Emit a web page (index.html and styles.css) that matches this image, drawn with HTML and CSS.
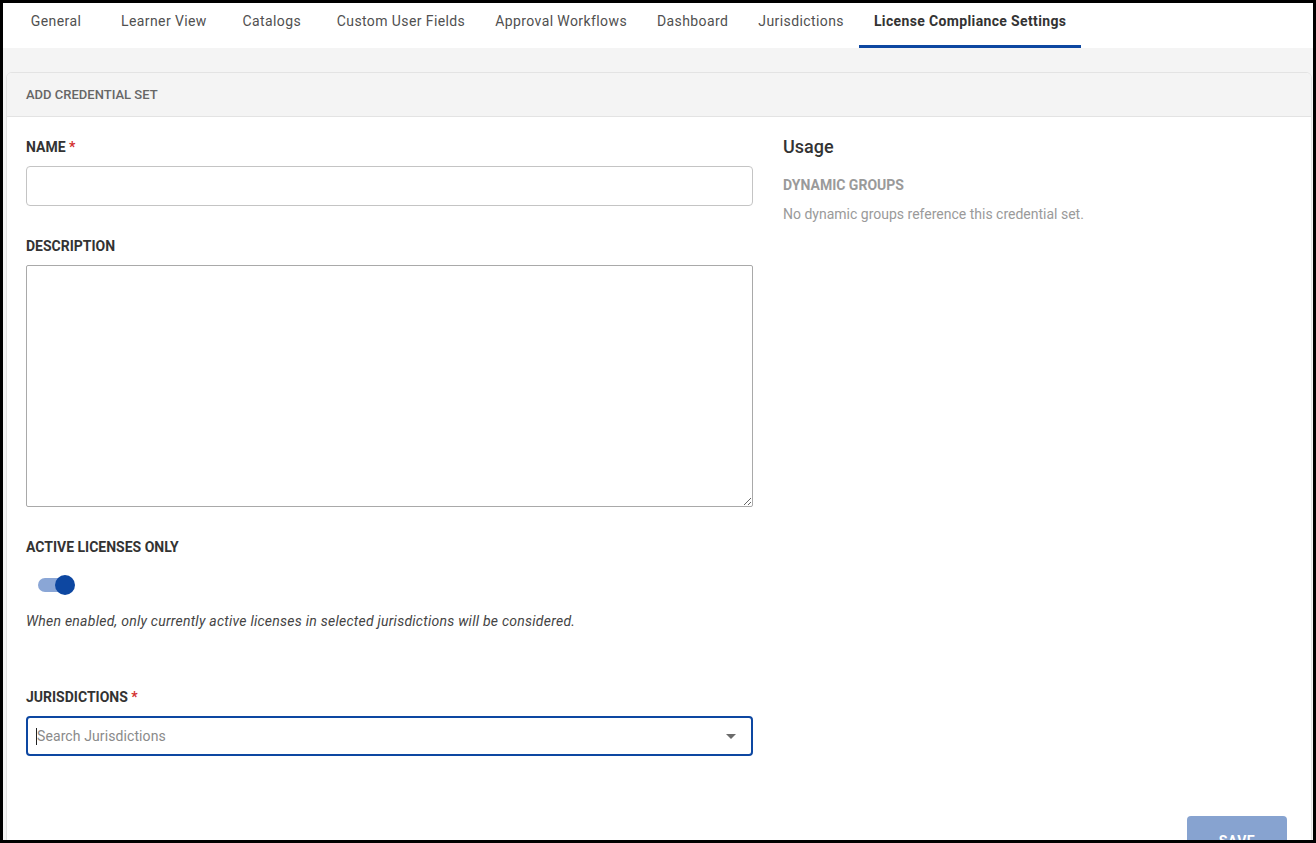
FILE: index.html
```html
<!DOCTYPE html>
<html>
<head>
<meta charset="utf-8">
<link rel="stylesheet" href="styles.css">
</head>
<body>
<div class="frame">
  <nav class="tabs">
    <div class="tab">General</div>
    <div class="tab">Learner View</div>
    <div class="tab">Catalogs</div>
    <div class="tab">Custom User Fields</div>
    <div class="tab">Approval Workflows</div>
    <div class="tab">Dashboard</div>
    <div class="tab">Jurisdictions</div>
    <div class="tab active">License Compliance Settings</div>
  </nav>
  <main class="page">
    <section class="card">
      <header class="card-head">ADD CREDENTIAL SET</header>
      <div class="card-body">
        <div class="cols">
          <div class="left">
            <label class="label">NAME <span class="req">*</span></label>
            <input class="input" type="text">
            <label class="label gap">DESCRIPTION</label>
            <textarea class="textarea"></textarea>
            <label class="label gap">ACTIVE LICENSES ONLY</label>
            <div class="toggle"><span class="track"></span><span class="knob"></span></div>
            <p class="help">When enabled, only currently active licenses in selected jurisdictions will be considered.</p>
            <label class="label gap-lg">JURISDICTIONS <span class="req">*</span></label>
            <div class="select"><span class="caret"></span><span class="placeholder">Search Jurisdictions</span><span class="arrow"></span></div>
          </div>
          <div class="right">
            <h2 class="usage">Usage</h2>
            <div class="sub">DYNAMIC GROUPS</div>
            <p class="muted">No dynamic groups reference this credential set.</p>
          </div>
        </div>
        <div class="footer"><button class="save">SAVE</button></div>
      </div>
    </section>
  </main>
</div>
</body>
</html>
```
FILE: styles.css
```css
html, body {
  margin: 0;
  padding: 0;
  background: #000;
}
body {
  font-family: Roboto, "Liberation Sans", Arial, sans-serif;
  color: #333;
}
.frame {
  margin: 3px;
  width: 1310px;
  height: 837px;
  overflow: hidden;
  background: #f4f4f4;
}
.tabs {
  display: flex;
  background: #fff;
  height: 45px;
  padding-left: 3px;
}
.tab {
  min-width: 100px;
  box-sizing: border-box;
  padding: 8px 15px 0;
  text-align: center;
  font-size: 14px;
  line-height: 20px;
  letter-spacing: 0.4px;
  color: #505050;
  white-space: nowrap;
}
.tab.active {
  font-weight: 700;
  color: #333;
  letter-spacing: 0.36px;
  border-bottom: 3px solid #0d47a1;
}
.page {
  padding: 24px 1px 0 3px;
}
.card {
  background: #fff;
  border: 1px solid #e3e3e3;
  border-radius: 6px;
  overflow: hidden;
}
.card-head {
  background: #f4f4f4;
  height: 43px;
  line-height: 44px;
  padding-left: 19px;
  font-size: 13px;
  font-weight: 500;
  color: #666;
  border-bottom: 1px solid #e3e3e3;
}
.card-body {
  padding: 20px 24px 0 19px;
}
.cols {
  display: grid;
  grid-template-columns: 727px 1fr;
  column-gap: 30px;
}
.left, .right {
  display: flex;
  flex-direction: column;
  align-items: flex-start;
}
.label {
  font-size: 14px;
  font-weight: 700;
  line-height: 20px;
  color: #333;
  margin-bottom: 9px;
}
.label.gap { margin-top: 30px; }
.label.gap-lg { margin-top: 56px; }
.req { color: #d32f2f; }
.input {
  width: 727px;
  height: 40px;
  box-sizing: border-box;
  border: 1px solid #c4c4c4;
  border-radius: 4px;
  margin: 0;
  outline: none;
}
.textarea {
  width: 727px;
  height: 242px;
  box-sizing: border-box;
  border: 1px solid #a9a9a9;
  border-radius: 2px;
  margin: 0;
  display: block;
}
.toggle {
  margin: 7px 0 0 12px;
  width: 38px;
  height: 24px;
  display: flex;
  align-items: center;
  position: relative;
}
.track {
  width: 34px;
  height: 14px;
  border-radius: 7px;
  background: #8aa6d6;
}
.knob {
  position: absolute;
  left: 17px;
  top: 2px;
  width: 20px;
  height: 20px;
  border-radius: 50%;
  background: #0d47a1;
}
.help {
  margin: 14px 0 0;
  font-size: 14px;
  line-height: 20px;
  font-style: italic;
  letter-spacing: 0.25px;
  color: #444;
}
.select {
  width: 727px;
  height: 40px;
  box-sizing: border-box;
  border: 2px solid #0d47a1;
  border-radius: 4px;
  display: flex;
  align-items: center;
  padding: 0 0 0 8px;
}
.caret {
  width: 1px;
  height: 17px;
  background: #222;
}
.placeholder {
  font-size: 14px;
  letter-spacing: 0.1px;
  color: #8a8a8a;
  flex: 1;
}
.arrow {
  width: 0;
  height: 0;
  border-left: 5px solid transparent;
  border-right: 5px solid transparent;
  border-top: 5px solid #6b6b6b;
  margin-right: 15px;
}
.usage {
  margin: -2px 0 0;
  font-size: 18px;
  font-weight: 500;
  line-height: 24px;
  color: #333;
}
.sub {
  margin-top: 16px;
  font-size: 14px;
  font-weight: 700;
  line-height: 20px;
  color: #9a9a9a;
}
.muted {
  margin: 9px 0 0;
  font-size: 14px;
  line-height: 20px;
  color: #9a9a9a;
}
.footer {
  display: flex;
  justify-content: flex-end;
  padding-top: 60px;
}
.save {
  width: 100px;
  height: 36px;
  border: none;
  border-radius: 4px;
  background: #87a3d0;
  color: #fff;
  font-family: Roboto, "Liberation Sans", Arial, sans-serif;
  font-size: 14px;
  font-weight: 700;
  letter-spacing: 0.5px;
  padding: 14px 0 0;
  margin-right: 0;
}
```
